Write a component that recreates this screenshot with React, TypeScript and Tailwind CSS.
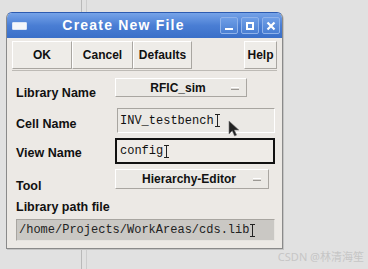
import type { ReactNode } from 'react';

const sans = "font-['Liberation_Sans',Arial,sans-serif]";
const mono = "font-['Liberation_Mono','Courier_New',monospace]";

function ToolButton({ children, className = '' }: { children: ReactNode; className?: string }) {
  return (
    <div
      className={`flex h-[28px] items-center justify-center border border-t-white border-l-white border-r-[#a9a6a1] border-b-[#a9a6a1] bg-[#eeece8] text-[12px] font-bold text-[#111] ${className}`}
    >
      {children}
    </div>
  );
}

function Combo({ label, className = '' }: { label: string; className?: string }) {
  return (
    <div
      className={`relative flex items-center justify-center border border-t-white border-l-white border-r-[#a9a6a1] border-b-[#a9a6a1] bg-[#ebe9e5] text-[12px] font-bold text-[#111] ${className}`}
    >
      <span className="-ml-[6px]">{label}</span>
      <span className="absolute top-1/2 right-[7px] h-[3px] w-[8px] -translate-y-[1px] border-t border-t-white border-b border-b-[#9c9994] bg-[#dcdad6]" />
    </div>
  );
}

function IBeam() {
  return (
    <svg width="5" height="13" viewBox="0 0 5 13" className="ml-[1px] shrink-0">
      <path d="M0 0.5h5M2.5 0.5v12M0 12.5h5" stroke="#222" strokeWidth="1" fill="none" />
    </svg>
  );
}

function TitleButton({ children }: { children: ReactNode }) {
  return (
    <div className="flex h-[17px] w-[18px] items-center justify-center rounded-[2px] border border-[#8fb2ea] bg-gradient-to-b from-[#6f9ee6] to-[#4a7fd3]">
      {children}
    </div>
  );
}

export default function App() {
  return (
    <div className={`relative h-[269px] w-[368px] overflow-hidden bg-[#e1e1e1] ${sans}`}>
      {/* desktop background stripes */}
      <div className="absolute top-0 left-[81px] h-full w-[1px] bg-[#b9b9b9]" />
      <div className="absolute top-0 left-[86px] h-full w-[1px] bg-[#cdcdcd]" />

      <div className="relative mt-[12px] ml-[6px] flex h-[237px] w-[277px] flex-col rounded-t-[6px] border border-[#8a8a8a] border-t-[#2d5bb0] bg-[#ece9e5] shadow-[1px_1px_0_#c4c4c4]">
        {/* title bar */}
        <div className="flex h-[25px] shrink-0 items-center rounded-t-[5px] bg-gradient-to-b from-[#76a3e8] via-[#4a7ed4] to-[#3a6fc8] pr-[2px] pl-[5px]">
          <div className="h-[8px] w-[15px] rounded-[1px] border border-[#d8e4f6] bg-[#f4f6fa]" />
          <div className="flex-1 text-center text-[14px] font-bold tracking-[1.2px] text-white">Create New File</div>
          <div className="flex gap-[3px]">
            <TitleButton>
              <div className="mt-[7px] h-[2px] w-[8px] bg-white" />
            </TitleButton>
            <TitleButton>
              <div className="h-[8px] w-[8px] border-[2px] border-white" />
            </TitleButton>
            <TitleButton>
              <svg width="10" height="10" viewBox="0 0 10 10">
                <path d="M1.5 1.5l7 7M8.5 1.5l-7 7" stroke="white" strokeWidth="2.2" />
              </svg>
            </TitleButton>
          </div>
        </div>

        {/* button row */}
        <div className="mx-[5px] flex h-[33px] shrink-0 items-start border-b border-b-[#bdbab5] pt-[3px]">
          <ToolButton className="w-[60px]">OK</ToolButton>
          <ToolButton className="w-[61px]">Cancel</ToolButton>
          <ToolButton className="w-[59px]">Defaults</ToolButton>
          <div className="flex-1" />
          <ToolButton className="w-[33px]">Help</ToolButton>
        </div>

        {/* form */}
        <div className="flex flex-col pl-[9px] text-[12.5px] font-bold text-[#111]">
          <div className="mt-[7px] flex h-[19px] items-start">
            <div className="w-[99px] pt-[8px] leading-[14px]">Library Name</div>
            <Combo label="RFIC_sim" className="h-[19px] w-[132px]" />
          </div>

          <div className="mt-[11px] flex h-[25px] items-start">
            <div className="w-[99px] pt-[9px] leading-[14px]">Cell Name</div>
            <div
              className={`ml-[2px] flex h-[25px] w-[158px] items-center border border-t-[#a8a5a0] border-l-[#a8a5a0] border-r-white border-b-white bg-[#ebe9e5] pl-[2px] text-[12px] font-normal text-[#111] ${mono}`}
            >
              INV_testbench
              <IBeam />
            </div>
          </div>

          <div className="mt-[5px] flex h-[26px] items-start">
            <div className="w-[99px] pt-[8px] leading-[14px]">View Name</div>
            <div
              className={`flex h-[26px] w-[160px] items-center border-2 border-[#111] bg-[#eeebe7] pl-[3px] text-[12px] font-normal text-[#111] ${mono}`}
            >
              config
              <IBeam />
            </div>
          </div>

          <div className="mt-[5px] flex h-[20px] items-start">
            <div className="w-[99px] pt-[10px] leading-[14px]">Tool</div>
            <Combo label="Hierarchy-Editor" className="h-[20px] w-[154px]" />
          </div>

          <div className="mt-[11px] h-[14px] leading-[14px]">Library path file</div>

          <div
            className={`mt-[5px] flex h-[22px] w-[259px] items-center border border-t-[#a8a5a0] border-l-[#a8a5a0] border-r-[#e6e4e0] border-b-[#e6e4e0] bg-[#cac8c4] pl-[2px] text-[12px] font-normal text-[#222] ${mono}`}
          >
            /home/Projects/WorkAreas/cds.lib
            <IBeam />
          </div>
        </div>
      </div>

      {/* mouse pointer */}
      <svg width="11" height="17" viewBox="0 0 11 17" className="absolute top-[120px] left-[228px]">
        <path d="M1 1v13l3.2-3.2 2.4 5.2 2-0.9-2.3-5.1h4.5z" fill="#222" stroke="#777" strokeWidth="0.6" />
      </svg>

      {/* watermark */}
      <div className="absolute right-[4px] bottom-[4px] text-[11px] text-[#c6c6c6] font-['Noto_Sans','Noto_Sans_CJK_SC',sans-serif]">
        CSDN @林清海笙
      </div>
    </div>
  );
}
